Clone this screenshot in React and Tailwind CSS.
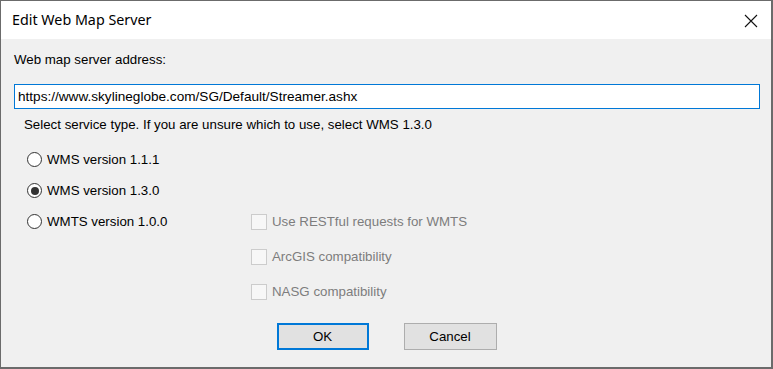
import { useState } from 'react';

const ui = { fontFamily: '"Liberation Sans", Arial, sans-serif' };

function Radio({ label, checked, onSelect }) {
  return (
    <div onClick={onSelect} className="flex items-center h-[31px] cursor-default">
      <span className="w-[15px] h-[15px] rounded-full border border-[#333333] bg-white flex items-center justify-center">
        {checked && <span className="w-[8px] h-[8px] rounded-full bg-[#333333]" />}
      </span>
      <span className="ml-[5px] text-[13.3px] text-black">{label}</span>
    </div>
  );
}

function DisabledCheck({ label }) {
  return (
    <div className="flex items-center h-[31px]">
      <span className="w-[16px] h-[16px] border border-[#cccccc] bg-[#f7f7f7]" />
      <span className="ml-[5px] text-[13.3px] text-[#7d7d7d]">{label}</span>
    </div>
  );
}

export default function App() {
  const [version, setVersion] = useState('1.3.0');
  const [url, setUrl] = useState('https://www.skylineglobe.com/SG/Default/Streamer.ashx');

  return (
    <div className="w-[773px] h-[369px] bg-white">
      <div className="w-[773px] h-[369px] flex flex-col border-l border-t border-r-2 border-b-2 border-[#6b6b6b]" style={ui}>
        <div className="h-[38px] bg-white flex items-center justify-between pl-[11px] pr-[12px]">
          <span className="text-[14.3px] text-black" style={{ fontFamily: '"Noto Sans", "Open Sans", sans-serif' }}>Edit Web Map Server</span>
          <svg width="14" height="14" viewBox="0 0 14 14" className="mr-[1px] mt-[1px]">
            <path d="M1 1 L13 13 M13 1 L1 13" stroke="#111111" strokeWidth="1.1" fill="none" />
          </svg>
        </div>

        <div className="flex-1 bg-[#f0f0f0] flex flex-col pl-[13px] pr-[10px] pt-[13px]">
          <p className="text-[13.3px] leading-[16px] text-black">Web map server address:</p>

          <input
            value={url}
            onChange={(e) => setUrl(e.target.value)}
            className="mt-[16px] w-[746px] h-[25px] border border-[#0078d7] bg-white px-[3px] text-[13.6px] text-black outline-none"
          />

          <p className="mt-[8px] ml-[10px] text-[13.3px] leading-[16px] text-black">
            Select service type. If you are unsure which to use, select WMS 1.3.0
          </p>

          <div className="mt-[11px] ml-[13px] flex flex-col">
            <Radio label="WMS version 1.1.1" checked={version === '1.1.1'} onSelect={() => setVersion('1.1.1')} />
            <Radio label="WMS version 1.3.0" checked={version === '1.3.0'} onSelect={() => setVersion('1.3.0')} />
            <div className="flex">
              <div className="w-[224px]">
                <Radio label="WMTS version 1.0.0" checked={version === '1.0.0'} onSelect={() => setVersion('1.0.0')} />
              </div>
              <div className="flex flex-col gap-[4px]">
                <DisabledCheck label="Use RESTful requests for WMTS" />
                <DisabledCheck label="ArcGIS compatibility" />
                <DisabledCheck label="NASG compatibility" />
              </div>
            </div>
          </div>

          <div className="mt-[16px] flex justify-center gap-[35px] pr-[2px]">
            <button className="w-[92px] h-[27px] border-2 border-[#0078d7] bg-[#e1e1e1] text-[13.3px] text-black">OK</button>
            <button className="w-[93px] h-[27px] border border-[#adadad] bg-[#e1e1e1] text-[13.3px] text-black">Cancel</button>
          </div>
        </div>
      </div>
    </div>
  );
}
